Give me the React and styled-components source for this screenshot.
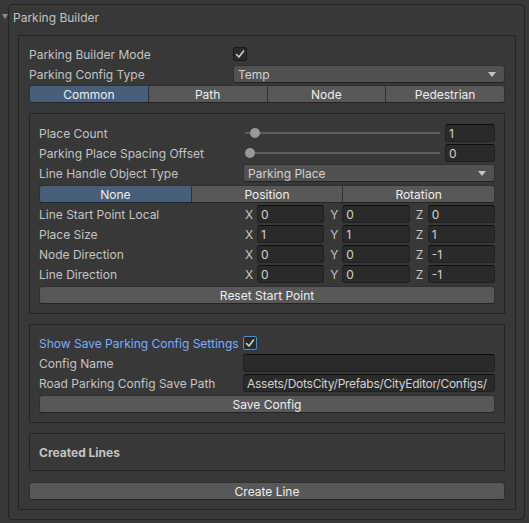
import React from "react";
import styled, { createGlobalStyle } from "styled-components";

const GlobalStyle = createGlobalStyle`
  html, body {
    margin: 0;
    padding: 0;
    background: #383838;
  }
  body {
    width: 529px;
    height: 523px;
    overflow: hidden;
    font-family: Inter, "Noto Sans", sans-serif;
    font-size: 12px;
    color: #c4c4c4;
  }
`;

const Foldout = styled.div`
  position: relative;
  box-sizing: border-box;
  width: 517px;
  height: 516px;
  margin: 4px 0 0 8px;
  border: 1px solid #242424;
  border-radius: 4px;
  display: flex;
  flex-direction: column;
`;

const FoldoutHeader = styled.div`
  height: 25px;
  display: flex;
  align-items: center;
  padding-left: 4px;
`;

const Arrow = styled.span`
  position: absolute;
  left: -7px;
  top: 9px;
  width: 0;
  height: 0;
  border-left: 3.5px solid transparent;
  border-right: 3.5px solid transparent;
  border-top: 5px solid #8c8c8c;
`;

const Section = styled.div`
  margin: 5px 8px 9px 9px;
  border: 1px solid #232323;
  padding: 8px 10px 9px 10px;
  display: flex;
  flex-direction: column;
  flex: 1;
`;

const Box = styled.div`
  margin-top: 10px;
  border: 1px solid #232323;
  padding: ${({ $pad }) => $pad || "9px 9px 9px 9px"};
  display: flex;
  flex-direction: column;
`;

const Row = styled.div`
  height: 20px;
  display: flex;
  align-items: center;
`;

const Label = styled.div`
  width: 204px;
  flex: none;
  white-space: nowrap;
  color: ${({ $focus }) => ($focus ? "#7baefa" : "#c4c4c4")};
`;

const Control = styled.div`
  flex: 1;
  min-width: 0;
  display: flex;
  align-items: center;
  height: 18px;
`;

const Check = styled.div`
  box-sizing: border-box;
  width: 14px;
  height: 14px;
  border-radius: 2px;
  background: #2a2a2a;
  border: 1px solid ${({ $focus }) => ($focus ? "#4a8ad2" : "#1a1a1a")};
  display: flex;
  align-items: center;
  justify-content: center;
`;

const Dropdown = styled.div`
  box-sizing: border-box;
  flex: 1;
  height: 18px;
  background: #515151;
  border: 1px solid #303030;
  border-bottom-color: #242424;
  border-radius: 3px;
  display: flex;
  align-items: center;
  justify-content: space-between;
  padding: 0 8px 0 4px;
  color: #d2d2d2;
`;

const DropArrow = styled.span`
  width: 0;
  height: 0;
  border-left: 4px solid transparent;
  border-right: 4px solid transparent;
  border-top: 5px solid #c4c4c4;
`;

const Field = styled.div`
  box-sizing: border-box;
  flex: ${({ $w }) => ($w ? "none" : "1")};
  width: ${({ $w }) => ($w ? `${$w}px` : "auto")};
  min-width: 0;
  height: 18px;
  background: #2a2a2a;
  border: 1px solid #212121;
  border-top-color: #0d0d0d;
  border-radius: 3px;
  padding: 0 2px 0 3px;
  display: flex;
  align-items: center;
  color: #d2d2d2;
  white-space: nowrap;
  overflow: hidden;
  letter-spacing: ${({ $tight }) => ($tight ? "-0.25px" : "normal")};
`;

const Tabs = styled.div`
  box-sizing: border-box;
  height: 18px;
  margin: ${({ $m }) => $m || "1px 0 0 0"};
  display: flex;
  border: 1px solid #303030;
  border-bottom-color: #242424;
  border-radius: 3px;
  overflow: hidden;
`;

const Tab = styled.div`
  flex: 1;
  display: flex;
  align-items: center;
  justify-content: center;
  color: #eeeeee;
  background: ${({ $active }) => ($active ? "#46607c" : "#585858")};
  & + & {
    border-left: 1px solid #303030;
  }
`;

const Button = styled.div`
  box-sizing: border-box;
  height: 18px;
  margin-top: ${({ $mt }) => $mt || 2}px;
  background: #585858;
  border: 1px solid #303030;
  border-bottom-color: #242424;
  border-radius: 3px;
  display: flex;
  align-items: center;
  justify-content: center;
  color: #eeeeee;
`;

const Slider = styled.div`
  position: relative;
  flex: 1;
  height: 18px;
  margin: 0 5px 0 2px;
  display: flex;
  align-items: center;
`;

const Track = styled.div`
  flex: 1;
  height: 2px;
  background: #5e5e5e;
`;

const Thumb = styled.span`
  position: absolute;
  top: 4px;
  width: 10px;
  height: 10px;
  border-radius: 50%;
  background: #999999;
`;

const Vector = styled.div`
  flex: 1;
  display: flex;
  gap: 4px;
`;

const Axis = styled.div`
  flex: 1;
  display: flex;
  align-items: center;
`;

const AxisLabel = styled.span`
  width: 12px;
  padding-left: 2px;
  flex: none;
`;

const HeaderBox = styled.div`
  margin-top: 10px;
  box-sizing: border-box;
  height: 38px;
  border: 1px solid #232323;
  display: flex;
  align-items: center;
  padding-left: 9px;
  font-weight: 700;
`;

const CheckMark = () => (
  <svg width="10" height="10" viewBox="0 0 10 10">
    <polyline
      points="1.5,5.5 4,8 8.5,2"
      fill="none"
      stroke="#d0d0d0"
      strokeWidth="1.6"
      strokeLinecap="round"
      strokeLinejoin="round"
    />
  </svg>
);

const SliderRow = ({ label, value, thumb }) => (
  <Row>
    <Label>{label}</Label>
    <Control>
      <Slider>
        <Track />
        <Thumb style={{ left: thumb }} />
      </Slider>
      <Field $w={50}>{value}</Field>
    </Control>
  </Row>
);

const VectorRow = ({ label, values }) => (
  <Row>
    <Label>{label}</Label>
    <Control>
      <Vector>
        {["X", "Y", "Z"].map((axis, i) => (
          <Axis key={axis}>
            <AxisLabel>{axis}</AxisLabel>
            <Field>{values[i]}</Field>
          </Axis>
        ))}
      </Vector>
    </Control>
  </Row>
);

const vectors = [
  { label: "Line Start Point Local", values: ["0", "0", "0"] },
  { label: "Place Size", values: ["1", "1", "1"] },
  { label: "Node Direction", values: ["0", "0", "-1"] },
  { label: "Line Direction", values: ["0", "0", "-1"] },
];

const App = () => {
  return (
    <>
      <GlobalStyle />
      <Foldout>
        <Arrow />
        <FoldoutHeader>Parking Builder</FoldoutHeader>
        <Section>
          <Row>
            <Label>Parking Builder Mode</Label>
            <Control>
              <Check>
                <CheckMark />
              </Check>
            </Control>
          </Row>
          <Row>
            <Label>Parking Config Type</Label>
            <Control>
              <Dropdown>
                Temp
                <DropArrow />
              </Dropdown>
            </Control>
          </Row>
          <Tabs>
            <Tab $active>Common</Tab>
            <Tab>Path</Tab>
            <Tab>Node</Tab>
            <Tab>Pedestrian</Tab>
          </Tabs>

          <Box>
            <SliderRow label="Place Count" value="1" thumb={5} />
            <SliderRow label="Parking Place Spacing Offset" value="0" thumb={0} />
            <Row>
              <Label>Line Handle Object Type</Label>
              <Control>
                <Dropdown>
                  Parking Place
                  <DropArrow />
                </Dropdown>
              </Control>
            </Row>
            <Tabs $m="2px 0 1px 0">
              <Tab $active>None</Tab>
              <Tab>Position</Tab>
              <Tab>Rotation</Tab>
            </Tabs>
            {vectors.map((v) => (
              <VectorRow key={v.label} label={v.label} values={v.values} />
            ))}
            <Button>Reset Start Point</Button>
          </Box>

          <Box $pad="8px 9px 9px 9px">
            <Row>
              <Label $focus>Show Save Parking Config Settings</Label>
              <Control>
                <Check $focus>
                  <CheckMark />
                </Check>
              </Control>
            </Row>
            <Row>
              <Label>Config Name</Label>
              <Control>
                <Field />
              </Control>
            </Row>
            <Row>
              <Label>Road Parking Config Save Path</Label>
              <Control>
                <Field $tight>Assets/DotsCity/Prefabs/CityEditor/Configs/</Field>
              </Control>
            </Row>
            <Button>Save Config</Button>
          </Box>

          <HeaderBox>Created Lines</HeaderBox>

          <Button $mt={11}>Create Line</Button>
        </Section>
      </Foldout>
    </>
  );
};

export default App;
